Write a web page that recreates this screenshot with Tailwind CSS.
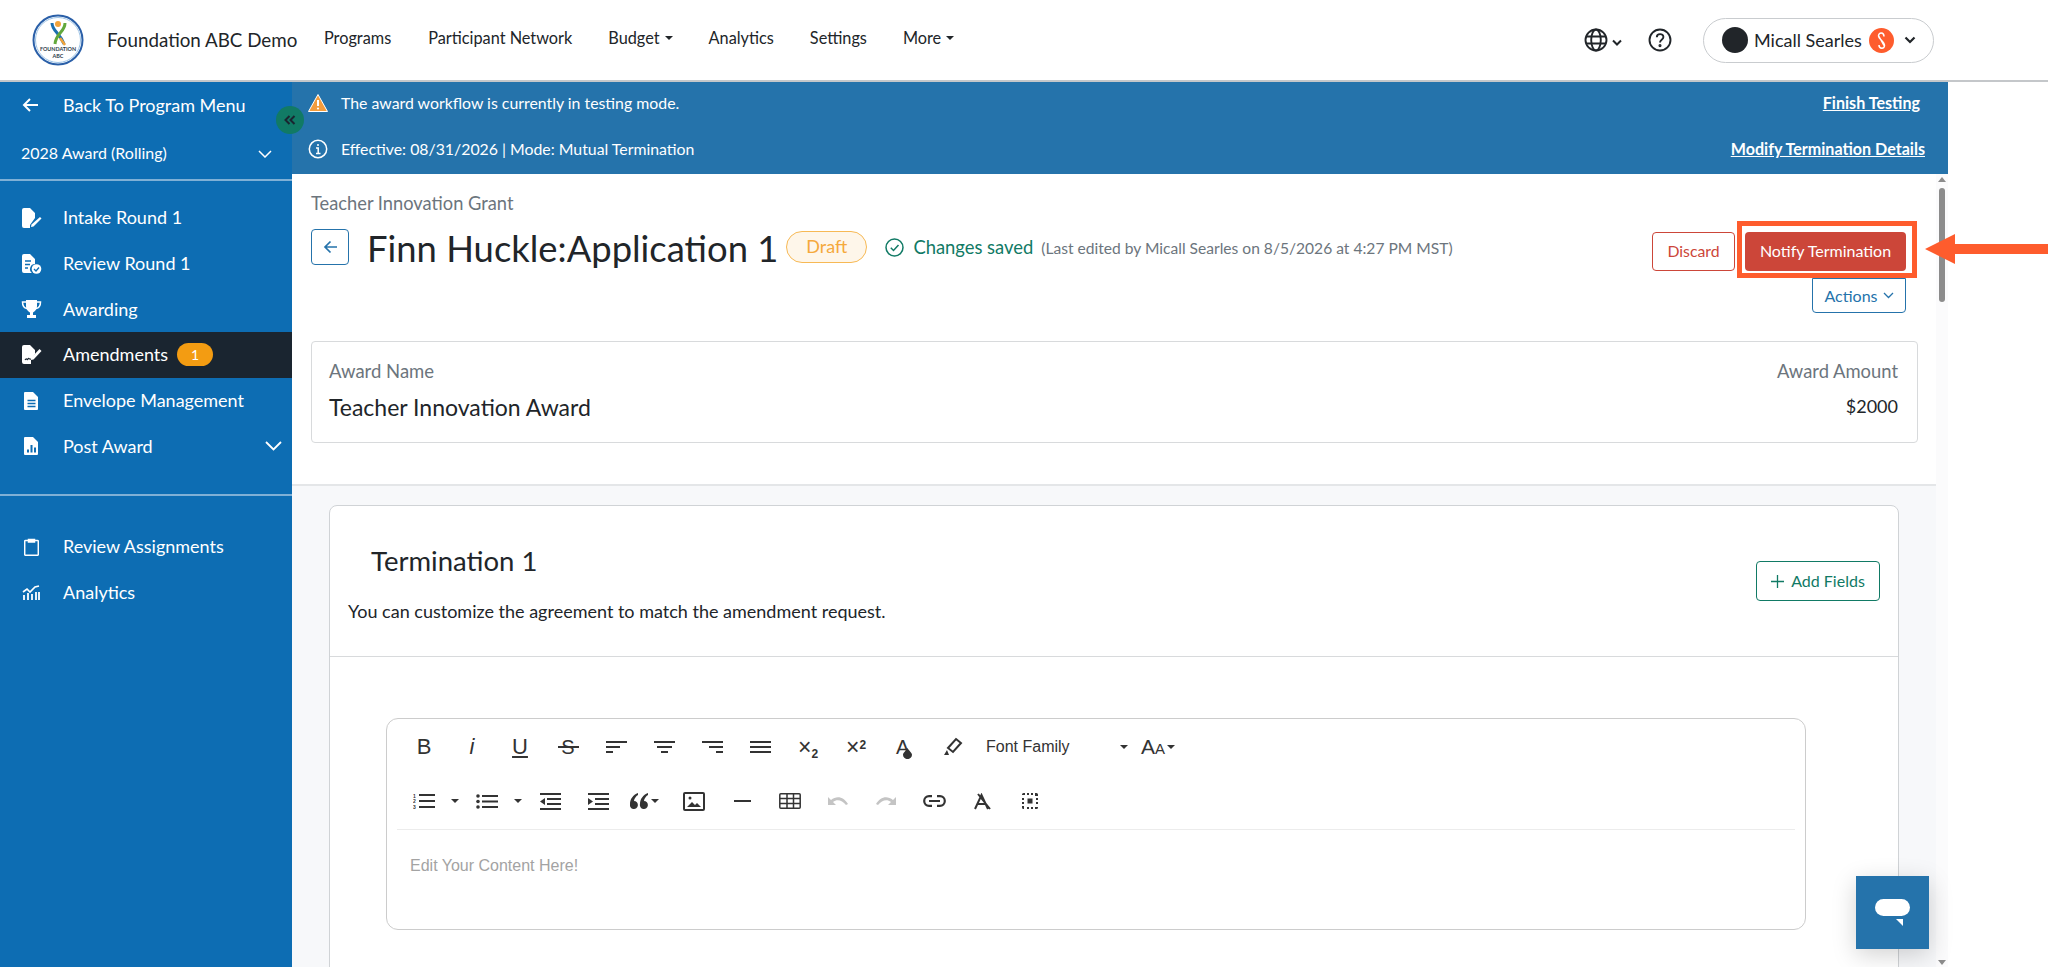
<!DOCTYPE html>
<html lang="en">
<head>
  <meta charset="UTF-8">
  <title>Finn Huckle: Application 1</title>
  <script src="https://cdn.jsdelivr.net/npm/@tailwindcss/browser@4"></script>
</head>
<body class="[font-family:Lato,sans-serif] bg-white text-[#212529] h-screen overflow-hidden">

  <!-- top nav -->
  <header class="h-[82px] border-b-2 border-[#c4c7ca] flex items-center pl-[32px] pr-[114px] bg-white">
    <svg class="w-[52px] h-[52px] shrink-0" viewBox="0 0 52 52">
      <circle cx="26" cy="26" r="24.500" fill="#fff" stroke="#2a5fa8" stroke-width="2"/>
      <circle cx="26" cy="26" r="22.500" fill="none" stroke="#9cc3e6" stroke-width="1"/>
      <circle cx="26" cy="10" r="3" fill="#f2a33a"/>
      <path d="M20 9c0 8 8 10 12 21" fill="none" stroke="#1c6fb0" stroke-width="3"/>
      <path d="M33 9c0 9-9 10-10 21" fill="none" stroke="#62a83c" stroke-width="3"/>
      <path d="M28 24l5 7" fill="none" stroke="#f2a33a" stroke-width="2.500"/>
      <text x="26" y="37" text-anchor="middle" font-size="5.400" font-weight="700" fill="#2b3a4a">FOUNDATION</text>
      <text x="26" y="43.500" text-anchor="middle" font-size="5.400" font-weight="700" fill="#2b3a4a">ABC</text>
    </svg>
    <span class="ml-[23px] text-[18.800px] w-[217px] shrink-0 whitespace-nowrap">Foundation ABC Demo</span>
    <nav class="flex items-center gap-[36px] text-[16.300px] -mt-[4px]">
      <a class="mr-[1px]">Programs</a>
      <a>Participant Network</a>
      <a class="flex items-center gap-[5px]">Budget <span class="border-x-[4px] border-t-[4px] border-x-transparent border-t-[#212529]"></span></a>
      <a>Analytics</a>
      <a>Settings</a>
      <a class="flex items-center gap-[5px]">More <span class="border-x-[4px] border-t-[4px] border-x-transparent border-t-[#212529]"></span></a>
    </nav>
    <div class="ml-auto flex items-center">
      <svg class="w-[24px] h-[24px]" viewBox="0 0 24 24" fill="none" stroke="#212529" stroke-width="1.900">
        <circle cx="12" cy="12" r="10.500"/><ellipse cx="12" cy="12" rx="4.800" ry="10.500"/><path d="M2 8.500h20M2 15.500h20"/>
      </svg>
      <svg class="w-[12px] h-[8px] mt-[6px] ml-[3px]" viewBox="0 0 12 8" fill="none" stroke="#212529" stroke-width="2"><path d="M2 1.500l4 4 4-4"/></svg>
      <svg class="w-[24px] h-[24px] ml-[25px]" viewBox="0 0 24 24" fill="none" stroke="#212529" stroke-width="1.900">
        <circle cx="12" cy="12" r="10.500"/><path d="M8.800 9.300c0-4.200 6.600-4.200 6.600-.2 0 2.800-3.400 2.600-3.400 5.400"/><circle cx="12" cy="17.600" r=".6" fill="#212529"/>
      </svg>
      <div class="ml-[31px] w-[231px] h-[45px] rounded-full border border-[#c9cccf] flex items-center pl-[18px]">
        <span class="w-[26px] h-[26px] rounded-full bg-[#212529]"></span>
        <span class="ml-[6px] text-[18px] w-[115px]">Micall Searles</span>
        <svg class="w-[25px] h-[25px]" viewBox="0 0 25 25"><circle cx="12.500" cy="12.500" r="12.500" fill="#fe5c2d"/><path d="M15 8.500c0-4.500-5.500-4.500-5.500-.5 0 3 6 5.500 6 9.500 0 4-5.500 3.500-5.500-.5M10 8.500l5 9" fill="none" stroke="#fff" stroke-width="1.500"/></svg>
        <svg class="w-[12px] h-[8px] ml-[10px]" viewBox="0 0 12 8" fill="none" stroke="#212529" stroke-width="2.200"><path d="M1.500 1.500l4.500 4.500 4.500-4.500"/></svg>
      </div>
    </div>
  </header>

  <div class="flex h-[885px]">
    <!-- sidebar -->
    <aside class="relative w-[292px] shrink-0 bg-[#0d6db3] text-white text-[18px]">
      <div class="h-[46px] flex items-center pl-[22px]">
        <svg class="w-[17px] h-[16px]" viewBox="0 0 17 16" fill="none" stroke="#fff" stroke-width="2"><path d="M16 8H2M8 2L2 8l6 6"/></svg>
        <span class="ml-[24px]">Back To Program Menu</span>
      </div>
      <div class="h-[53px] pb-[2px] flex items-center pl-[21px] pr-[20px] justify-between border-b-2 border-[#7fb0d6] text-[16px]">
        <span>2028 Award (Rolling)</span>
        <svg class="w-[14px] h-[8px] mt-[2px]" viewBox="0 0 14 8" fill="none" stroke="#fff" stroke-width="1.500"><path d="M1 1l6 6 6-6"/></svg>
      </div>
      <ul class="pt-[14px]">
        <li class="h-[45.700px] flex items-center pl-[21px]">
          <svg class="w-[21px] h-[20px]" viewBox="0 0 21 20" fill="#fff"><path d="M1 2a2 2 0 0 1 2-2h6l5 5v5l-5 7v3H3a2 2 0 0 1-2-2z"/><path d="M19 9l1.500 1.500-8 8L10 19l.5-2.500z"/></svg>
          <span class="ml-[21px]">Intake Round 1</span>
        </li>
        <li class="h-[45.700px] flex items-center pl-[21px]">
          <svg class="w-[21px] h-[20px]" viewBox="0 0 21 20"><path d="M1 2a2 2 0 0 1 2-2h6l5 5v5a5 5 0 0 0-3 9H3a2 2 0 0 1-2-2z" fill="#fff"/><path d="M4 7h6M4 10.500h5M4 14h3" stroke="#0d6db3" stroke-width="1.400"/><circle cx="15.500" cy="15" r="4.800" fill="#fff"/><path d="M13 15l2 2 3-3.500" fill="none" stroke="#0d6db3" stroke-width="1.300"/></svg>
          <span class="ml-[21px]">Review Round 1</span>
        </li>
        <li class="h-[45.700px] flex items-center pl-[21px]">
          <svg class="w-[21px] h-[20px]" viewBox="0 0 21 20"><path d="M5 1h11v6c0 4-3 6-4 6.500V16h3v3H6v-3h3v-2.500C8 13 5 11 5 7z" fill="#fff"/><path d="M5 3H1.500c0 4 1.500 6 4.500 6.500M16 3h3.500c0 4-1.500 6-4.500 6.500" fill="none" stroke="#fff" stroke-width="1.500"/></svg>
          <span class="ml-[21px]">Awarding</span>
        </li>
        <li class="h-[45.700px] flex items-center pl-[21px] bg-[#1a2530]">
          <svg class="w-[21px] h-[20px]" viewBox="0 0 21 20"><path d="M1 2a2 2 0 0 1 2-2h6l5 5v4l-4 6v4H3a2 2 0 0 1-2-2z" fill="#fff"/><path d="M4 15c2-3 2 1 3-1s1 1 3 0" fill="none" stroke="#1a2530" stroke-width="1.200"/><path d="M18.500 4l2 2-8 8.500-2.500.5.500-2.500z" fill="#fff"/></svg>
          <span class="ml-[21px]">Amendments</span>
          <span class="ml-[9px] w-[36px] h-[23px] rounded-full bg-[#f39c12] text-[14px] flex items-center justify-center">1</span>
        </li>
        <li class="h-[45.700px] flex items-center pl-[24px]">
          <svg class="w-[15px] h-[18px]" viewBox="0 0 15 18"><path d="M1 0h8l5 5v12a1 1 0 0 1-1 1H1a1 1 0 0 1-1-1V1a1 1 0 0 1 1-1z" fill="#fff"/><path d="M3.500 8.500h8M3.500 11.500h8M3.500 14.500h8" stroke="#0d6db3" stroke-width="1.300"/></svg>
          <span class="ml-[24px]">Envelope Management</span>
        </li>
        <li class="h-[45.700px] flex items-center pl-[24px] pr-[10px]">
          <svg class="w-[15px] h-[18px]" viewBox="0 0 15 18"><path d="M1 0h8l5 5v12a1 1 0 0 1-1 1H1a1 1 0 0 1-1-1V1a1 1 0 0 1 1-1z" fill="#fff"/><path d="M4 15.500v-3M7.500 15.500V8M11 15.500v-5" stroke="#0d6db3" stroke-width="2"/></svg>
          <span class="ml-[24px]">Post Award</span>
          <svg class="ml-auto w-[17px] h-[10px]" viewBox="0 0 17 10" fill="none" stroke="#fff" stroke-width="1.800"><path d="M1 1l7.500 7.500L16 1"/></svg>
        </li>
      </ul>
      <div class="mt-[25px] border-t-2 border-[#7fb0d6] pt-[28px]">
        <div class="h-[45.700px] flex items-center pl-[24px]">
          <svg class="w-[15px] h-[18px]" viewBox="0 0 15 18" fill="none" stroke="#fff" stroke-width="1.500"><path d="M4.500 2.500H1.500a.8.8 0 0 0-.8.8V16.500a.8.8 0 0 0 .8.8h12a.8.8 0 0 0 .8-.8V3.300a.8.8 0 0 0-.8-.8h-3"/><path d="M4.500 1.500h6V4h-6z" fill="#fff"/></svg>
          <span class="ml-[24px]">Review Assignments</span>
        </div>
        <div class="h-[45.700px] flex items-center pl-[22px]">
          <svg class="w-[18px] h-[16px]" viewBox="0 0 18 16"><path d="M1 7l4-3 3 3 5-5 4-1" fill="none" stroke="#fff" stroke-width="1.700"/><path d="M2 10v5M6 8v7M10 9v6M14 7v8M17 7v8" stroke="#fff" stroke-width="1.800"/></svg>
          <span class="ml-[23px]">Analytics</span>
        </div>
      </div>
      <!-- collapse toggle sits over the sidebar edge -->
      <button class="absolute top-[24px] left-[276px] w-[28px] h-[28px] rounded-full bg-[#117a65] z-10 flex items-center justify-center">
        <svg class="w-[12px] h-[10px]" viewBox="0 0 12 10" fill="none" stroke="#1a2530" stroke-width="2"><path d="M5.500 1L1.500 5l4 4M10.500 1l-4 4 4 4"/></svg>
      </button>
    </aside>

    <!-- main column -->
    <main class="w-[1656px] shrink-0 flex flex-col">
      <div class="h-[92px] bg-[#2573ab] text-white text-[15.850px]">
        <div class="h-[45px] pb-[3px] flex items-center pl-[16px] pr-[28px]">
          <svg class="w-[20px] h-[18px]" viewBox="0 0 20 18"><path d="M10 .5L19.500 17.500H.5z" fill="#f39c3c" stroke="#fff" stroke-width="1" stroke-linejoin="round"/><path d="M10 6v6" stroke="#fff" stroke-width="2"/><circle cx="10" cy="14.500" r="1.100" fill="#fff"/></svg>
          <span class="ml-[13px]">The award workflow is currently in testing mode.</span>
          <a class="ml-auto underline font-bold text-[16.100px]">Finish Testing</a>
        </div>
        <div class="h-[45px] flex items-center pl-[16px] pr-[23px]">
          <svg class="w-[20px] h-[20px] -mt-[2px]" viewBox="0 0 20 20" fill="none" stroke="#fff" stroke-width="1.500"><circle cx="10" cy="10" r="8.700"/><path d="M8 9h2.200v5.500M8 14.500h4.500" /><circle cx="10" cy="6" r="1" fill="#fff" stroke="none"/></svg>
          <span class="ml-[13px] -mt-[2px]">Effective: 08/31/2026 | Mode: Mutual Termination</span>
          <a class="ml-auto underline font-bold text-[16.100px]">Modify Termination Details</a>
        </div>
      </div>

      <div class="flex flex-1 min-h-0">
        <div class="flex-1 min-w-0 overflow-hidden bg-[#f7f8fa]">
          <!-- page head -->
          <section class="h-[312px] bg-white border-b-2 border-[#e4e6e8] pl-[19px] pr-[18px] pt-[17px]">
            <p class="text-[18.300px] leading-[24px] text-[#6c757d]">Teacher Innovation Grant</p>
            <div class="flex justify-between items-start mt-[14px] h-[113px]">
              <div class="flex items-center h-[36px]">
                <button class="w-[38px] h-[36px] rounded-[4px] border border-[#2573ab] flex items-center justify-center">
                  <svg class="w-[15px] h-[14px]" viewBox="0 0 15 14" fill="none" stroke="#2573ab" stroke-width="1.700"><path d="M14 7H2M7.500 1.500L2 7l5.500 5.500"/></svg>
                </button>
                <h1 class="ml-[18px] mt-[1px] text-[36.400px] leading-[40px] whitespace-nowrap">Finn Huckle:Application 1</h1>
                <span class="ml-[8px] w-[81px] h-[32px] mt-[-1px] rounded-full border border-[#f7b955] bg-[#fef6ea] text-[#f5a93c] text-[18px] flex items-center justify-center">Draft</span>
                <svg class="ml-[18px] w-[19px] h-[19px] mt-[1px]" viewBox="0 0 19 19" fill="none" stroke="#117a65" stroke-width="1.500"><circle cx="9.500" cy="9.500" r="8.500"/><path d="M5.800 9.800l2.700 2.700 5-5.500"/></svg>
                <span class="ml-[9px] text-[18.400px] mt-[1px] text-[#117a65] whitespace-nowrap">Changes saved</span>
                <span class="ml-[8px] text-[15.600px] mt-[3px] text-[#6c757d] whitespace-nowrap">(Last edited by Micall Searles on 8/5/2026 at 4:27 PM MST)</span>
              </div>
              <div class="flex flex-col items-end pt-[3px] pr-[12px]">
                <div class="flex gap-[10px]">
                  <button class="w-[83px] h-[39px] pb-[1px] rounded-[4px] border border-[#cc4639] text-[#cc4639] text-[15.800px]">Discard</button>
                  <div class="relative">
                    <button class="w-[161px] h-[39px] pb-[1px] rounded-[4px] bg-[#cc4639] text-white text-[16px]">Notify Termination</button>
                    <span class="absolute left-[-8px] top-[-11px] w-[180px] h-[57px] border-[5px] border-[#fe5c2d]"></span>
                  </div>
                </div>
                <button class="mt-[7px] w-[94px] h-[35px] rounded-b-[4px] border border-[#2573ab] text-[#2573ab] text-[16px] flex items-center justify-center gap-[5px]">
                  Actions
                  <svg class="w-[11px] h-[7px]" viewBox="0 0 11 7" fill="none" stroke="#2573ab" stroke-width="1.300"><path d="M1 1l4.500 4.500L10 1"/></svg>
                </button>
              </div>
            </div>
            <div class="h-[102px] mt-[-1px] rounded-[4px] border border-[#d8dadc] pl-[18px] pr-[19px] pt-[17px] flex justify-between">
              <div>
                <p class="text-[18.500px] leading-[24px] text-[#6c757d] -ml-[1px]">Award Name</p>
                <p class="mt-[11px] text-[23px] leading-[26px] -ml-[1px]">Teacher Innovation Award</p>
              </div>
              <div class="text-right">
                <p class="text-[18.400px] leading-[24px] text-[#6c757d]">Award Amount</p>
                <p class="mt-[10px] text-[18px] leading-[26px]">$2000</p>
              </div>
            </div>
          </section>

          <!-- termination card -->
          <section class="ml-[37px] mr-[37px] mt-[19px] h-[600px] bg-white rounded-t-[8px] border border-[#d0d3d6]">
            <div class="h-[151px] border-b border-[#d8dadc] relative flex justify-between pl-[18px] pr-[18px]">
              <div>
                <h2 class="ml-[23px] mt-[38px] text-[27.500px] leading-[34px]">Termination 1</h2>
                <p class="mt-[21px] text-[18px] leading-[24px]">You can customize the agreement to match the amendment request.</p>
              </div>
              <button class="mt-[55px] w-[124px] h-[40px] rounded-[4px] border border-[#117a65] text-[#117a65] text-[16px] flex items-center justify-center gap-[7px]">
                <svg class="w-[13px] h-[13px]" viewBox="0 0 13 13" stroke="#117a65" stroke-width="1.300"><path d="M6.500 0v13M0 6.500h13"/></svg>
                Add Fields
              </button>
            </div>
            <div class="ml-[56px] mt-[61px] mr-[92px] h-[212px] rounded-[12px] border border-[#ccc] px-[10px] [font-family:'Liberation_Sans',sans-serif] text-[#333]">
              <div class="flex items-center h-[54px] pt-[2px] pl-[3px]">
                <span class="w-[48px] text-center text-[22px] leading-[24px]">B</span>
                <span class="w-[48px] text-center text-[22px] leading-[24px] italic">i</span>
                <span class="w-[48px] text-center text-[22px] leading-[24px] underline">U</span>
                <span class="w-[48px] relative text-center text-[20px] leading-[24px]">S<span class="absolute left-[14px] top-[11px] w-[21px] h-[2px] bg-[#333]"></span></span>
                <span class="w-[48px] flex justify-center"><svg class="w-[21px] h-[14px]" viewBox="0 0 21 14" fill="#333"><path d="M0 1h21v2H0zM0 6h14v2H0zM0 11h7v2H0z"/></svg></span>
                <span class="w-[48px] flex justify-center"><svg class="w-[21px] h-[14px]" viewBox="0 0 21 14" fill="#333"><path d="M0 1h21v2H0zM3 6h15v2H3zM7 11h7v2H7z"/></svg></span>
                <span class="w-[48px] flex justify-center"><svg class="w-[21px] h-[14px]" viewBox="0 0 21 14" fill="#333"><path d="M0 1h21v2H0zM7 6h14v2H7zM14 11h7v2h-7z"/></svg></span>
                <span class="w-[48px] flex justify-center"><svg class="w-[21px] h-[14px]" viewBox="0 0 21 14" fill="#333"><path d="M0 1h21v2H0zM0 6h21v2H0zM0 11h21v2H0z"/></svg></span>
                <span class="w-[48px] text-center text-[23px] leading-[24px]">×<sub class="text-[12px] font-bold">2</sub></span>
                <span class="w-[48px] text-center text-[23px] leading-[24px]">×<sup class="text-[12px] font-bold">2</sup></span>
                <span class="w-[48px] relative pl-[16px] text-[20px] leading-[24px]">A<svg class="absolute left-[23px] top-[13px] w-[9px] h-[11px]" viewBox="0 0 9 11" fill="#333"><path d="M4.500 0C6 3 9 4.500 9 6.800a4.500 4.300 0 0 1-9 0C0 4.500 3 3 4.500 0z"/></svg></span>
                <span class="w-[48px] flex justify-center"><svg class="w-[21px] h-[20px]" viewBox="0 0 21 20" fill="none" stroke="#333" stroke-width="2"><path d="M14 2l5 4-8 9-5-4z"/><path d="M5 13l-3 5h5z" fill="#333" stroke="none"/></svg></span>
                <span class="w-[144px] pl-[10px] text-[16px]">Font Family</span>
                <span class="border-x-[4px] border-t-[4px] border-x-transparent border-t-[#333]"></span>
                <span class="ml-[13px] text-[21px]">A<span class="text-[15px]">A</span></span>
                <span class="ml-[2px] border-x-[4px] border-t-[4px] border-x-transparent border-t-[#333]"></span>
              </div>
              <div class="flex items-center h-[56px] pb-[2px] pt-[2px] pl-[3px]">
                <span class="w-[48px] flex justify-center relative"><svg class="w-[22px] h-[16px]" viewBox="0 0 22 16" fill="#333"><path d="M6 1h16v2H6zM6 7h16v2H6zM6 13h16v2H6z"/><text x="0" y="5" font-size="5" font-weight="700">1</text><text x="0" y="10" font-size="5" font-weight="700">2</text><text x="0" y="15.500" font-size="5" font-weight="700">3</text></svg><span class="absolute left-[51px] top-[6px] border-x-[4px] border-t-[4px] border-x-transparent border-t-[#333]"></span></span>
                <span class="w-[15px]"></span>
                <span class="w-[48px] flex justify-center relative"><svg class="w-[22px] h-[15px]" viewBox="0 0 22 15" fill="#333"><path d="M6 1h16v2H6zM6 6.500h16v2H6zM6 12h16v2H6z"/><circle cx="2" cy="2" r="1.800"/><circle cx="2" cy="7.500" r="1.800"/><circle cx="2" cy="13" r="1.800"/></svg><span class="absolute left-[51px] top-[5px] border-x-[4px] border-t-[4px] border-x-transparent border-t-[#333]"></span></span>
                <span class="w-[15px]"></span>
                <span class="w-[48px] flex justify-center"><svg class="w-[21px] h-[17px]" viewBox="0 0 21 17" fill="#333"><path d="M0 0h21v2H0zM7 5h14v2H7zM7 10h14v2H7zM0 15h21v2H0zM5 5v7L0 8.500z"/></svg></span>
                <span class="w-[48px] flex justify-center"><svg class="w-[21px] h-[17px]" viewBox="0 0 21 17" fill="#333"><path d="M0 0h21v2H0zM7 5h14v2H7zM7 10h14v2H7zM0 15h21v2H0zM0 5v7l5-3.500z"/></svg></span>
                <span class="w-[48px] flex justify-center items-center gap-[3px] pr-[4px]"><svg class="w-[18px] h-[16px]" viewBox="0 0 18 16" fill="#333"><path d="M8 0C3 2 0 6 0 11a4 4 0 1 0 4-3c0-2 2-5 4-6zM18 0c-5 2-8 6-8 11a4 4 0 1 0 4-3c0-2 2-5 4-6z"/></svg><span class="border-x-[4px] border-t-[4px] border-x-transparent border-t-[#333]"></span></span>
                <span class="w-[48px] flex justify-center"><svg class="w-[22px] h-[19px]" viewBox="0 0 22 19" fill="none" stroke="#333" stroke-width="2"><rect x="1" y="1" width="20" height="17" rx="1"/><path d="M4 15l5-5 3 3 2-2 4 4z" fill="#333" stroke="none"/><circle cx="7" cy="6" r="1.500" fill="#333" stroke="none"/></svg></span>
                <span class="w-[48px] flex justify-center"><span class="w-[17px] h-[2px] bg-[#333]"></span></span>
                <span class="w-[48px] flex justify-center"><svg class="w-[22px] h-[16px]" viewBox="0 0 22 16" fill="none" stroke="#333" stroke-width="1.500"><rect x=".8" y=".8" width="20.400" height="14.400" rx="1"/><path d="M1 5.500h20M1 10.500h20M8 1v14M14.500 1v14"/></svg></span>
                <span class="w-[48px] flex justify-center"><svg class="w-[20px] h-[10px]" viewBox="0 0 20 10" fill="#c4c4c4"><path d="M0 1v8h8L5 6c4-3 9-2 13 3l2-1C16 1 9-1 3 4z"/></svg></span>
                <span class="w-[48px] flex justify-center"><svg class="w-[20px] h-[10px]" viewBox="0 0 20 10" fill="#c4c4c4"><path d="M20 1v8h-8l3-3C11 3 6 4 2 9L0 8C4 1 11-1 17 4z"/></svg></span>
                <span class="w-[48px] flex justify-center"><svg class="w-[23px] h-[12px]" viewBox="0 0 23 12" fill="none" stroke="#333" stroke-width="2.200"><path d="M9 1.200H6a4.800 4.800 0 0 0 0 9.600h3M14 1.200h3a4.800 4.800 0 0 1 0 9.600h-3M6 6h11"/></svg></span>
                <span class="w-[48px] flex justify-center"><svg class="w-[17px] h-[17px]" viewBox="0 0 17 17" fill="none" stroke="#333" stroke-width="2"><path d="M1 16L7.500 2 14 16M4 11h7M4 1l12 15"/></svg></span>
                <span class="w-[48px] flex justify-center"><svg class="w-[16px] h-[16px]" viewBox="0 0 16 16" fill="#333"><path d="M5.500 5.500h5v5h-5zM0 1.500a1.500 1.500 0 0 1 1.500-1.500H3v2H0zM13 0h1.500A1.500 1.500 0 0 1 16 1.500V3h-3zM0 13h2v3H1.500A1.500 1.500 0 0 1 0 14.500zM13 14h3v.5a1.500 1.500 0 0 1-1.500 1.500H13zM5 0h2v2H5zM9 0h2v2H9zM5 14h2v2H5zM9 14h2v2H9zM0 5h2v2H0zM0 9h2v2H0zM14 5h2v2h-2zM14 9h2v2h-2z"/></svg></span>
              </div>
              <div class="border-t border-[#ececec] pt-[27px] pl-[13px] text-[16px] leading-[18px] text-[#a3a3a3]">Edit Your Content Here!</div>
            </div>
          </section>
        </div>

        <!-- scrollbar -->
        <div class="w-[12px] shrink-0 bg-[#fbfbfc] flex flex-col items-center pt-[3px]">
          <span class="border-x-[4px] border-b-[5px] border-x-transparent border-b-[#8c8c8c]"></span>
          <span class="mt-[6px] w-[6px] h-[114px] rounded-full bg-[#8c8c8c]"></span>
          <span class="mt-auto mb-[2px] border-x-[4px] border-t-[5px] border-x-transparent border-t-[#8c8c8c]"></span>
        </div>
      </div>
    </main>
  </div>

  <!-- annotation arrow -->
  <svg class="absolute left-[1925px] top-[234px] w-[123px] h-[30px]" viewBox="0 0 123 30" fill="#fe5c2d"><path d="M0 15L30 0v10h93v10H30v10z"/></svg>

  <!-- chat launcher -->
  <button class="absolute left-[1856px] top-[876px] w-[73px] h-[73px] bg-[#2573ab] shadow-[0_6px_24px_rgba(0,0,0,0.18)] flex items-center justify-center">
    <svg class="w-[35px] h-[28px]" viewBox="0 0 35 28" fill="#fff"><rect y="0" width="35" height="17" rx="8.500"/><path d="M21 20h7v7z"/></svg>
  </button>
</body>
</html>
